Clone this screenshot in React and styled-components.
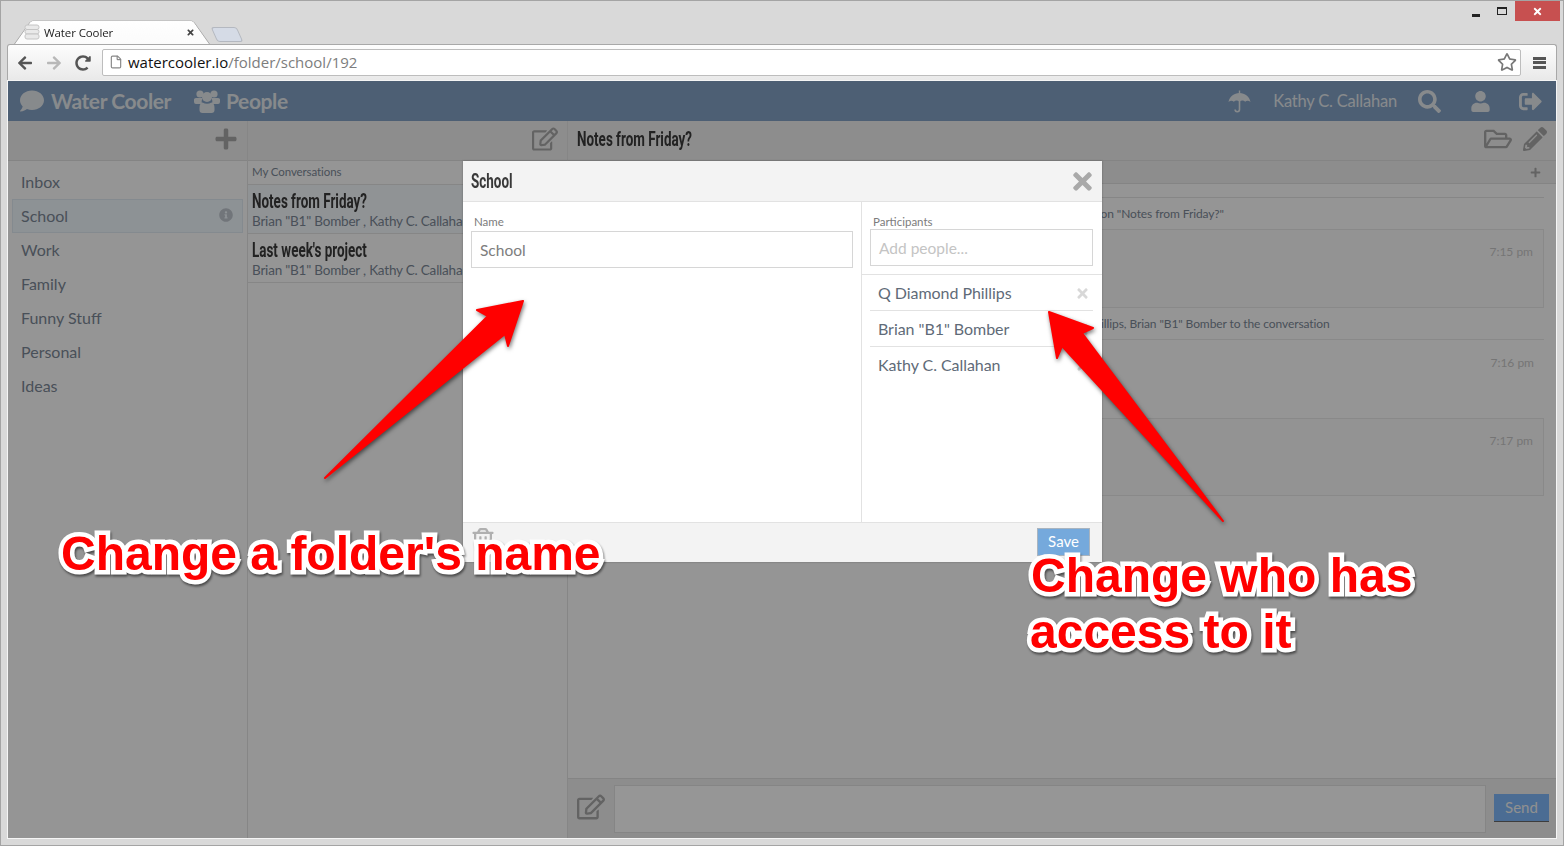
import React from 'react'
import styled, { createGlobalStyle } from 'styled-components'
import {
  FaComment, FaSearch, FaUser, FaSignOutAlt, FaPlus, FaRegEdit,
  FaRegFolderOpen, FaPencilAlt, FaInfoCircle, FaTimes, FaRegTrashAlt, FaRegStar,
  FaArrowLeft, FaArrowRight, FaRedoAlt,
} from 'react-icons/fa'
import { File } from 'lucide-react'

const Global = createGlobalStyle`
  html, body { margin: 0; padding: 0; overflow: hidden; }
  * { box-sizing: border-box; }
  body { font-family: Lato, "Open Sans", sans-serif; }
`

const Window = styled.div`
  position: relative;
  width: 1564px;
  height: 846px;
  overflow: hidden;
  background: #d9d9d9;
  border: 1px solid #a4a4a4;
  display: flex;
  flex-direction: column;
`

const TitleBar = styled.div`
  height: 43px;
  flex: none;
  display: flex;
  align-items: flex-end;
  padding-left: 20px;
  position: relative;
`

const Tab = styled.div`
  position: relative;
  width: 182px;
  height: 31px;
  display: flex;
  align-items: center;
  gap: 4px;
  padding: 7px 8px 0 3px;
  font: 11.5px "Open Sans", sans-serif;
  letter-spacing: -0.1px;
  color: #222;
  z-index: 1;
  &::before {
    content: '';
    position: absolute;
    inset: 0 -7px 0 -7px;
    background: linear-gradient(#fff, #fbfbfb);
    border: 1px solid #a8a8a8;
    border-bottom: none;
    border-radius: 5px 5px 0 0;
    transform: perspective(50px) rotateX(20deg);
    transform-origin: bottom;
    z-index: -1;
  }
`

const TabTitle = styled.span`
  flex: 1;
`

const NewTab = styled.div`
  width: 26px;
  height: 15px;
  margin: 0 0 2px 11px;
  background: #d5dbe6;
  border: 1px solid #b4b8c0;
  border-radius: 3px;
  transform: skewX(24deg);
`

const WinControls = styled.div`
  position: absolute;
  top: 0;
  right: 3px;
  display: flex;
  align-items: flex-start;
`

const WinBtn = styled.div`
  width: ${(p) => p.$w}px;
  height: 20px;
  display: flex;
  align-items: center;
  justify-content: center;
  background: ${(p) => p.$bg || 'transparent'};
  color: #fff;
`

const MinGlyph = styled.div`
  width: 8px;
  height: 3px;
  margin-top: 8px;
  background: #222;
`

const MaxGlyph = styled.div`
  width: 10px;
  height: 8px;
  border: 1px solid #222;
  border-top-width: 2px;
`

const Toolbar = styled.div`
  height: 37px;
  flex: none;
  margin: 0 6px;
  background: linear-gradient(#fdfdfd, #e9e9e9);
  border: 1px solid #a8a8a8;
  border-bottom-color: #b5b5b5;
  border-radius: 3px 3px 0 0;
  display: flex;
  align-items: center;
  padding: 0 9px;
`

const NavIcon = styled.div`
  width: 29px;
  font-size: 16px;
  color: ${(p) => p.$color || '#555'};
  display: flex;
  align-items: center;
`

const Address = styled.div`
  width: 1419px;
  margin-left: -2px;
  height: 27px;
  background: #fff;
  border: 1px solid #bdbdbd;
  border-radius: 2px;
  display: flex;
  align-items: center;
  padding: 0 3px 1px 6px;
  font: 15px "Open Sans", sans-serif;
  color: #7d7d7d;
`

const Host = styled.span`
  color: #111;
`

const Url = styled.div`
  flex: 1;
  margin-left: 5px;
`

const Burger = styled.div`
  width: 13px;
  height: 12px;
  margin-left: 12px;
  border-top: 3px solid #555;
  border-bottom: 3px solid #555;
  position: relative;
  &::after {
    content: '';
    position: absolute;
    left: 0;
    right: 0;
    top: 1.5px;
    height: 3px;
    background: #555;
  }
`

const App = styled.div`
  position: relative;
  margin: 0 7px;
  width: 1548px;
  height: 757px;
  flex: none;
  background: #f9f9f9;
  display: flex;
  flex-direction: column;
  box-shadow: 0 0 0 1px #f5f5f5;
`

const Overlay = styled.div`
  position: absolute;
  inset: 0;
  background: rgba(0, 0, 0, 0.4);
`

const Header = styled.header`
  height: 40px;
  flex: none;
  background: #809ec1;
  color: #e2e6ea;
  display: flex;
  align-items: center;
  padding: 0 14px 0 12px;
`

const Brand = styled.div`
  display: flex;
  align-items: center;
  gap: ${(p) => p.$gap}px;
  margin: 0 23px 1px 0;
  font-size: 21px;
  font-weight: 700;
  letter-spacing: -0.4px;
  svg { font-size: 24px; flex: none; }
`

const HeaderRight = styled.div`
  margin-left: auto;
  display: flex;
  align-items: center;
  font-size: 16.5px;
  letter-spacing: -0.2px;
`

const HeadIcon = styled.div`
  display: flex;
  font-size: ${(p) => p.$size || 23}px;
  margin: 0 ${(p) => p.$right || 0}px 0 ${(p) => p.$left || 0}px;
`

const Columns = styled.div`
  flex: 1;
  display: flex;
  min-height: 0;
`

const Col = styled.div`
  width: ${(p) => (p.$w ? `${p.$w}px` : 'auto')};
  flex: ${(p) => (p.$w ? 'none' : '1')};
  display: flex;
  flex-direction: column;
  border-right: ${(p) => (p.$w ? '1px solid #e0e0e0' : 'none')};
`

const ColBar = styled.div`
  height: 40px;
  flex: none;
  background: #ebebeb;
  border-bottom: 1px solid #dcdcdc;
  display: flex;
  align-items: center;
  justify-content: flex-end;
  padding: 0 9px 3px 9px;
  color: #a5a5a5;
  font-size: ${(p) => p.$icon || 24}px;
`

const BarIcons = styled.div`
  margin-left: auto;
  display: flex;
  align-items: center;
  gap: 11px;
  font-size: 24px;
  svg:first-child { font-size: 28px; }
`

const FolderList = styled.div`
  padding: 4px 4px 0 4px;
  display: flex;
  flex-direction: column;
`

const Folder = styled.div`
  height: 34px;
  display: flex;
  align-items: center;
  justify-content: space-between;
  padding: 0 9px 2px 8px;
  font-size: 16px;
  color: #7a8694;
  background: ${(p) => (p.$active ? '#ecf3f9' : 'transparent')};
  border: 1px solid ${(p) => (p.$active ? '#dde6ee' : 'transparent')};
  svg { color: #bcc4cb; font-size: 14px; }
`

const Condensed = styled.span`
  display: inline-block;
  font-family: Roboto, sans-serif;
  font-weight: 700;
  font-size: 21px;
  color: #393939;
  transform: scaleX(0.64);
  transform-origin: left center;
  white-space: nowrap;
`

const SmallHead = styled.div`
  height: 24px;
  flex: none;
  padding: 4px 4px 0;
  font-size: 11.5px;
  letter-spacing: -0.1px;
  color: #7a8694;
  border-bottom: 1px solid #dfdfdf;
`

const Convo = styled.div`
  height: 49px;
  padding: 4px 4px 0;
  border-bottom: 1px solid #dfdfdf;
  background: ${(p) => (p.$active ? '#f1f5f9' : 'transparent')};
  overflow: hidden;
`

const ConvoTitle = styled.div`
  height: 24px;
  display: flex;
  align-items: center;
`

const ConvoSub = styled.div`
  font-size: 13.5px;
  letter-spacing: -0.2px;
  line-height: 16px;
  color: #7a8694;
  white-space: nowrap;
`

const SubBar = styled.div`
  height: 23px;
  flex: none;
  background: #ebebeb;
  border-bottom: 1px solid #dcdcdc;
  display: flex;
  align-items: center;
  justify-content: flex-end;
  padding-right: 15px;
  color: #a5a5a5;
  font-size: 11px;
`

const Feed = styled.div`
  flex: 1;
  padding: 13px 12px 0 0;
  display: flex;
  flex-direction: column;
  min-height: 0;
`

const Notice = styled.div`
  height: ${(p) => p.$h}px;
  flex: none;
  border-top: ${(p) => (p.$top ? '1px solid #dfdfdf' : 'none')};
  padding-top: 8px;
  padding-left: ${(p) => p.$left}px;
  font-size: 12px;
  letter-spacing: -0.1px;
  color: #7a8694;
  white-space: nowrap;
`

const Msg = styled.div`
  height: ${(p) => p.$h}px;
  flex: none;
  border: ${(p) => (p.$plain ? 'none' : '1px solid #e4e4e4')};
  border-top: 1px solid #e4e4e4;
  background: ${(p) => (p.$plain ? 'transparent' : '#f6f6f6')};
  padding: ${(p) => (p.$plain ? 15 : 14)}px 10px 0 0;
  text-align: right;
  font-size: 12px;
  color: #c4c4c4;
`

const Compose = styled.div`
  height: 60px;
  flex: none;
  background: #ebebeb;
  border-top: 1px solid #dcdcdc;
  display: flex;
  align-items: center;
  padding: 0 7px 0 9px;
`

const ComposeIcon = styled.div`
  display: flex;
  width: 37px;
  margin-bottom: 3px;
  font-size: 28px;
  color: #a5a5a5;
`

const ComposeBox = styled.div`
  width: 872px;
  height: 48px;
  background: #fafafa;
  border: 1px solid #dedede;
`

const SendBtn = styled.div`
  width: 55px;
  height: 27px;
  margin: 0 0 3px 8px;
  background: #7db5f5;
  color: #f0f0f0;
  font-size: 15px;
  display: flex;
  align-items: center;
  justify-content: center;
  box-shadow: 0 1px 0 #666;
`

const Modal = styled.div`
  position: absolute;
  left: 455px;
  top: 80px;
  width: 639px;
  height: 401px;
  background: #fff;
  display: flex;
  flex-direction: column;
  box-shadow: 0 0 2px rgba(0, 0, 0, 0.3);
`

const ModalHead = styled.div`
  height: 41px;
  flex: none;
  background: #f3f3f3;
  border-bottom: 1px solid #e2e2e2;
  display: flex;
  align-items: center;
  justify-content: space-between;
  padding: 0 6px 0 8px;
  font-size: 27px;
  color: #a9a9a9;
`

const ModalBody = styled.div`
  flex: 1;
  display: flex;
  min-height: 0;
`

const NamePane = styled.div`
  width: 399px;
  flex: none;
  border-right: 1px solid #e2e2e2;
  padding: 12px 8px 0;
`

const FieldLabel = styled.div`
  font-size: 11.5px;
  line-height: 15px;
  margin-bottom: ${(p) => p.$gap || 0}px;
  padding-left: 3px;
  color: #7c7c7c;
`

const Field = styled.div`
  height: 37px;
  border: 1px solid #d6d6d6;
  padding-left: 8px;
  display: flex;
  align-items: center;
  font-size: 15.5px;
  color: ${(p) => p.$color};
`

const PeoplePane = styled.div`
  flex: 1;
  display: flex;
  flex-direction: column;
`

const PeopleTop = styled.div`
  height: 73px;
  flex: none;
  border-bottom: 1px solid #e2e2e2;
  padding: 12px 9px 0 8px;
`

const PeopleList = styled.div`
  padding: 0 9px 0 8px;
`

const Person = styled.div`
  height: 36px;
  display: flex;
  align-items: center;
  justify-content: space-between;
  padding: 0 3px ${(p) => (p.$last ? 1 : 0)}px 8px;
  font-size: 16px;
  letter-spacing: -0.05px;
  color: #5f6b78;
  border-bottom: ${(p) => (p.$last ? 'none' : '1px solid #e2e2e2')};
  svg { color: #d8d8d8; font-size: 15px; margin-top: 2px; }
`

const ModalFoot = styled.div`
  height: 40px;
  flex: none;
  background: #f3f3f3;
  border-top: 1px solid #e2e2e2;
  display: flex;
  justify-content: space-between;
  padding: 5px 12px 0 8px;
  color: #b0b0b0;
  font-size: 24px;
`

const SaveBtn = styled.div`
  width: 53px;
  height: 28px;
  padding-bottom: 2px;
  background: #75a9dc;
  border: 1px solid #a9b4bf;
  color: #fff;
  font-size: 15px;
  display: flex;
  align-items: center;
  justify-content: center;
`

const Annotation = styled.div`
  position: absolute;
  left: ${(p) => p.$x}px;
  top: ${(p) => p.$y}px;
  font: 700 48px/56px "Liberation Sans", Arial, sans-serif;
  color: #ff0000;
  -webkit-text-stroke: 9px #fff;
  paint-order: stroke fill;
  white-space: nowrap;
  filter: drop-shadow(1px 2px 1px rgba(0, 0, 0, 0.5));
`

const ArrowLayer = styled.svg`
  position: absolute;
  left: 0;
  top: 0;
  filter: drop-shadow(1px 2px 2px rgba(0, 0, 0, 0.55));
`

function Favicon() {
  return (
    <svg width="16" height="16" viewBox="0 0 16 16" fill="#e9e9e9" stroke="#c4c4c4" strokeWidth="1">
      <rect x="1" y="1" width="14" height="4.5" rx="2" />
      <rect x="1" y="5.5" width="14" height="4.5" rx="2" />
      <rect x="1" y="10" width="14" height="5" rx="2" />
    </svg>
  )
}

function PeopleIcon() {
  return (
    <svg width="26" height="24" viewBox="0 0 26 24" fill="currentColor">
      <circle cx="6" cy="5" r="3.6" />
      <circle cx="20" cy="5" r="3.6" />
      <path d="M0 10.5Q0 9 2 9h6.5q-1.5 3-.5 6H2q-2 0-2-2zM26 10.5Q26 9 24 9h-6.5q1.5 3 .5 6h6q2 0 2-2z" />
      <circle cx="13" cy="8" r="5" />
      <path d="M5.5 19q0-5 3-5.5 4.5 2.5 9 0 3 .5 3 5.5v2q0 3-3 3h-9q-3 0-3-3z" />
    </svg>
  )
}

function UmbrellaIcon() {
  return (
    <svg width="23" height="23" viewBox="0 0 23 23" fill="currentColor">
      <path d="M11.5 3C6 3 1.5 6.5 .5 12q2.8-2.5 5.3-.3 2.7-2.4 5.7 0 3-2.4 5.7 0 2.5-2.2 5.3.3C21.5 6.5 17 3 11.5 3z" />
      <rect x="10.8" y="0.5" width="1.4" height="3" />
      <path d="M11.5 10v9.5a2.2 2.2 0 0 1-4.4 0" fill="none" stroke="currentColor" strokeWidth="1.6" />
    </svg>
  )
}

const folders = ['Inbox', 'School', 'Work', 'Family', 'Funny Stuff', 'Personal', 'Ideas']
const people = ['Q Diamond Phillips', 'Brian "B1" Bomber', 'Kathy C. Callahan']

export default function Page() {
  return (
    <Window>
      <Global />
      <TitleBar>
        <Tab>
          <Favicon />
          <TabTitle>Water Cooler</TabTitle>
          <FaTimes size={9} color="#444" />
        </Tab>
        <NewTab />
        <WinControls>
          <WinBtn $w={27}><MinGlyph /></WinBtn>
          <WinBtn $w={26}><MaxGlyph /></WinBtn>
          <WinBtn $w={45} $bg="#c75050"><FaTimes size={11} /></WinBtn>
        </WinControls>
      </TitleBar>
      <Toolbar>
        <NavIcon><FaArrowLeft /></NavIcon>
        <NavIcon $color="#b8b8b8"><FaArrowRight /></NavIcon>
        <NavIcon><FaRedoAlt /></NavIcon>
        <Address>
          <File size={14} color="#888" />
          <Url><Host>watercooler.io</Host>/folder/school/192</Url>
          <FaRegStar size={20} color="#777" />
        </Address>
        <Burger />
      </Toolbar>
      <App>
        <Header>
          <Brand $gap={7}><FaComment />Water Cooler</Brand>
          <Brand $gap={6}><PeopleIcon />People</Brand>
          <HeaderRight>
            <HeadIcon $right={22}><UmbrellaIcon /></HeadIcon>
            Kathy C. Callahan
            <HeadIcon $left={21} $right={29}><FaSearch /></HeadIcon>
            <HeadIcon $size={21} $right={28}><FaUser /></HeadIcon>
            <HeadIcon><FaSignOutAlt /></HeadIcon>
          </HeaderRight>
        </Header>
        <Columns>
          <Col $w={240}>
            <ColBar><FaPlus /></ColBar>
            <FolderList>
              {folders.map((f) => (
                <Folder key={f} $active={f === 'School'}>
                  {f}
                  {f === 'School' && <FaInfoCircle />}
                </Folder>
              ))}
            </FolderList>
          </Col>
          <Col $w={320}>
            <ColBar $icon={26}><FaRegEdit /></ColBar>
            <SmallHead>My Conversations</SmallHead>
            <Convo $active>
              <ConvoTitle><Condensed>Notes from Friday?</Condensed></ConvoTitle>
              <ConvoSub>Brian "B1" Bomber , Kathy C. Callahan</ConvoSub>
            </Convo>
            <Convo>
              <ConvoTitle><Condensed>Last week's project</Condensed></ConvoTitle>
              <ConvoSub>Brian "B1" Bomber , Kathy C. Callahan</ConvoSub>
            </Convo>
          </Col>
          <Col>
            <ColBar>
              <Condensed>Notes from Friday?</Condensed>
              <BarIcons>
                <FaRegFolderOpen />
                <FaPencilAlt />
              </BarIcons>
            </ColBar>
            <SubBar><FaPlus /></SubBar>
            <Feed>
              <Notice $top $h={32} $left={315}>Brian "B1" Bomber started a conversation on "Notes from Friday?"</Notice>
              <Msg $h={79}>7:15 pm</Msg>
              <Notice $h={31} $left={328}>Kathy C. Callahan added Q Diamond Phillips, Brian "B1" Bomber to the conversation</Notice>
              <Msg $h={79} $plain>7:16 pm</Msg>
              <Msg $h={78}>7:17 pm</Msg>
            </Feed>
            <Compose>
              <ComposeIcon><FaRegEdit /></ComposeIcon>
              <ComposeBox />
              <SendBtn>Send</SendBtn>
            </Compose>
          </Col>
        </Columns>
        <Overlay />
        <Modal>
          <ModalHead>
            <Condensed>School</Condensed>
            <FaTimes />
          </ModalHead>
          <ModalBody>
            <NamePane>
              <FieldLabel $gap={2}>Name</FieldLabel>
              <Field $color="#7d7d7d">School</Field>
            </NamePane>
            <PeoplePane>
              <PeopleTop>
                <FieldLabel>Participants</FieldLabel>
                <Field $color="#c4c4c4">Add people...</Field>
              </PeopleTop>
              <PeopleList>
                {people.map((p, i) => (
                  <Person key={p} $last={i === 2}>
                    {p}
                    <FaTimes />
                  </Person>
                ))}
              </PeopleList>
            </PeoplePane>
          </ModalBody>
          <ModalFoot>
            <FaRegTrashAlt />
            <SaveBtn>Save</SaveBtn>
          </ModalFoot>
        </Modal>
      </App>
      <ArrowLayer width="1564" height="846" viewBox="1 0 1564 846">
        <g fill="#ff0000" stroke="#ff0000" strokeWidth="2" strokeLinejoin="round">
          <polygon points="523,300 477,309 488,315 325,477 505,333 508,345" />
          <polygon points="1049,311 1093,327 1082,332 1223,520 1062,345 1057,357" />
        </g>
      </ArrowLayer>
      <Annotation $x={60} $y={525}>Change a folder's name</Annotation>
      <Annotation $x={1030} $y={547}>Change who has</Annotation>
      <Annotation $x={1029} $y={603}>access to it</Annotation>
    </Window>
  )
}
